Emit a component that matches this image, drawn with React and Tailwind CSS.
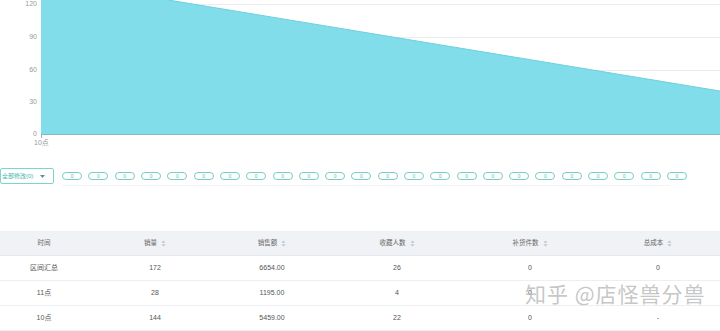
import React from 'react';

const pills = Array.from({ length: 24 }, (_, i) => i);

const columns = [
  { title: '时间', width: 'w-[88px]', sort: false },
  { title: '销量', width: 'w-[134px]', sort: true },
  { title: '销售额', width: 'w-[100px]', sort: true },
  { title: '收藏人数', width: 'w-[150px]', sort: true },
  { title: '补货件数', width: 'w-[116px]', sort: true },
  { title: '总成本', width: 'w-[140px]', sort: true },
];

const rows = [
  ['区间汇总', '172', '6654.00', '26', '0', '0'],
  ['11点', '28', '1195.00', '4', '0', '-'],
  ['10点', '144', '5459.00', '22', '0', '-'],
];

const SortIcon = () => (
  <svg width="5" height="7" viewBox="0 0 5 7" className="ml-[4px]">
    <path d="M2.5 0.5 L4.5 2.8 L0.5 2.8 Z" fill="#c0c4cc" />
    <path d="M2.5 6.5 L4.5 4.2 L0.5 4.2 Z" fill="#c0c4cc" />
  </svg>
);

const Chart = () => (
  <svg width="720" height="150" viewBox="0 0 720 150" className="block">
    {[4, 37, 70, 102].map((y) => (
      <line key={y} x1="41" x2="720" y1={y + 0.5} y2={y + 0.5} stroke="#e9ebef" strokeWidth="1" />
    ))}
    <polygon points="41,134 41,-21 720,91 720,134" fill="#80dde9" />
    <polyline points="41,-21 720,91" fill="none" stroke="#6fcfdf" strokeWidth="1" />
    <line x1="41" x2="720" y1="134.5" y2="134.5" stroke="#8fb3bd" strokeWidth="1.2" />
    <line x1="41.5" x2="41.5" y1="134" y2="138" stroke="#8fb3bd" strokeWidth="1" />
    {[
      ['120', 6],
      ['90', 39],
      ['60', 72],
      ['30', 104],
      ['0', 136],
    ].map(([t, y]) => (
      <text key={t} x="37" y={y} textAnchor="end" fontSize="7" fill="#9a9a9a" fontFamily="Liberation Sans, sans-serif">
        {t}
      </text>
    ))}
    <text x="34" y="145" fontSize="7" fill="#9a9a9a" fontFamily="Liberation Sans, 'Noto Sans CJK SC', sans-serif">
      10点
    </text>
  </svg>
);

export default function App() {
  return (
    <div className="relative w-[720px] h-[331px] overflow-hidden bg-white font-['Liberation_Sans','Noto_Sans_CJK_SC',sans-serif]">
      <Chart />

      <div className="flex items-center h-[16px] mt-[18px]">
        <div className="flex items-center justify-between w-[54px] h-[16px] border border-[#7fd6c8] rounded-[2px] pl-[1px] pr-[8px] text-[6px] text-[#45b5b0]">
          <span>全部修改(0)</span>
          <svg width="5" height="3" viewBox="0 0 5 3">
            <path d="M0 0 L5 0 L2.5 3 Z" fill="#6a8f8a" />
          </svg>
        </div>
        <div className="relative flex ml-[5px]">
          {pills.map((i) => (
            <div key={i} className="flex flex-col items-center w-[26.3px] shrink-0">
              <div className="flex items-center justify-center w-[20px] h-[8px] border border-[#74d0c0] rounded-full text-[5px] leading-none text-[#6cb8ad]">
                0
              </div>
            </div>
          ))}
          <div className="absolute left-[3px] right-[20px] top-[13px] border-t border-[#f2f4f5]" />
        </div>
      </div>

      <div className="mt-[47px] flex flex-col text-[7px] text-[#555]">
        <div className="flex h-[25px] bg-[#f0f2f5] border-b border-[#e6e8eb]">
          {columns.map((c) => (
            <div key={c.title} className={`${c.width} shrink-0 flex items-center justify-center text-[6.5px] text-[#666]`}>
              <span>{c.title}</span>
              {c.sort && <SortIcon />}
            </div>
          ))}
        </div>
        {rows.map((r, ri) => (
          <div key={ri} className="flex h-[25px] border-b border-[#eceef1]">
            {r.map((cell, ci) => (
              <div key={ci} className={`${columns[ci].width} shrink-0 flex items-center justify-center`}>
                {cell}
              </div>
            ))}
          </div>
        ))}
      </div>

      <div className="absolute left-[525px] top-[283px] text-[21px] leading-none text-[#b8b8b8]/80 font-['Noto_Sans_CJK_SC',sans-serif] tracking-[1px]">
        知乎 @店怪兽分兽
      </div>
    </div>
  );
}
